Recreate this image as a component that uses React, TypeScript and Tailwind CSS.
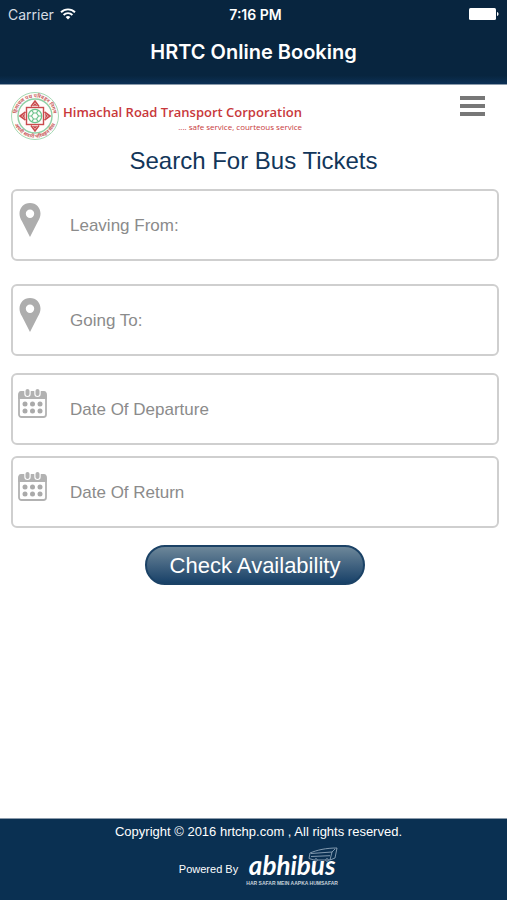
import React from "react";

function WifiIcon() {
  return (
    <svg viewBox="0 0 16 12" className="h-3 w-4" aria-hidden="true">
      <g fill="none" stroke="#fff" strokeWidth="1.9">
        <path d="M1 4.2a10 10 0 0 1 14 0" />
        <path d="M3.6 7a6.2 6.2 0 0 1 8.800 0" />
      </g>
      <path d="M8 11.600 5.600 9.100a3.400 3.400 0 0 1 4.800 0Z" fill="#fff" />
    </svg>
  );
}

function BatteryIcon() {
  return (
    <svg viewBox="0 0 30 12" className="h-3 w-[30px]" aria-hidden="true">
      <rect width="27" height="12" rx="1.5" fill="#fff" />
      <path d="M28 4c2 .3 2 3.700 0 4Z" fill="#fff" />
    </svg>
  );
}

function Emblem() {
  return (
    <svg viewBox="0 0 50 50" className="size-[50px] shrink-0" aria-hidden="true">
      <defs>
        <path id="seal-top" d="M9 34.250A18.500 18.500 0 1 1 41 34.250" />
        <path id="seal-bottom" d="M5.900 14A22 22 0 1 0 44.100 14" />
      </defs>
      <circle cx="25" cy="25" r="23.500" fill="#fffdfb" stroke="#a5d9b5" strokeWidth="1" />
      <circle cx="25" cy="25" r="17" fill="none" stroke="#8fcfa5" strokeWidth="1.400" />
      <g fill="#c9605f" fontFamily="Noto Sans Devanagari, Noto Sans, sans-serif" fontSize="5" fontWeight="700">
        <text>
          <textPath href="#seal-top" startOffset="50%" textAnchor="middle">हिमाचल पथ परिवहन निगम</textPath>
        </text>
        <text>
          <textPath href="#seal-bottom" startOffset="50%" textAnchor="middle">अपनी सवारी परिवहन सेवा</textPath>
        </text>
      </g>
      <g fill="none" stroke="#c94a4c">
        <rect x="16.500" y="16.500" width="17" height="17" strokeWidth="1.400" />
        <path d="m21 15.500 4-5.500 4 5.500M34.500 21l5.500 4-5.500 4M29 34.500 25 40l-4-5.500M15.500 29 10 25l5.500-4" strokeWidth="1.600" />
        <path d="M23.500 15 25 13l1.500 2M35 23.500l2 1.500-2 1.500M26.500 35 25 37l-1.500-2M15 26.500 13 25l2-1.500" strokeWidth="1.300" />
      </g>
      <g fill="none" stroke="#6cc28b" strokeWidth="1.200">
        <circle cx="25" cy="25" r="6.700" />
        <path d="M18.500 25h3l2-3h3l2 3-2 3h-3l-2-3M28.500 25h3M23.500 22 22 19.500M26.500 22l1.500-2.500M23.500 28 22 30.500M26.500 28l1.500 2.500" />
      </g>
    </svg>
  );
}

function PinIcon() {
  return (
    <svg viewBox="0 0 22 34" className="mt-3 ml-1.5 h-[34px] w-[22px]" aria-hidden="true">
      <path
        fill="#adadad"
        fillRule="evenodd"
        d="M11 0C4.800 0 .5 4.700.5 10.500c0 3 .9 5 2.600 8L11 34l7.900-15.500c1.700-3 2.600-5 2.600-8C21.500 4.700 17.200 0 11 0Zm0 6.600a4.200 4.200 0 1 1 0 8.400 4.200 4.200 0 0 1 0-8.400Z"
      />
    </svg>
  );
}

function CalendarIcon() {
  return (
    <svg viewBox="0 0 29 29" className="mt-3.5 ml-[5px] size-[29px]" aria-hidden="true">
      <rect x="1" y="4" width="27" height="24" rx="2.500" fill="#fff" stroke="#b2b2b2" strokeWidth="1.800" />
      <path d="M.2 10V6Q.2 2 3 2h23q2.800 0 2.800 4v4Z" fill="#b2b2b2" />
      {[9.5, 19.5].map((x) => (
        <g key={x}>
          <rect x={x - 3.200} y="-1" width="6.400" height="9" rx="3.200" fill="#fff" />
          <rect x={x - 2} y="0" width="4" height="7" rx="2" fill="#b2b2b2" />
        </g>
      ))}
      {[15, 22].map((y) =>
        [7, 14.5, 22].map((x) => <circle key={`${x}-${y}`} cx={x} cy={y} r="2.500" fill="#aaa" />),
      )}
    </svg>
  );
}

function BusIcon() {
  return (
    <svg viewBox="0 0 30 16" className="absolute -top-1 right-0 h-4 w-[30px]" aria-hidden="true">
      <g fill="none" stroke="#9fb4c7" strokeWidth=".8">
        <path d="M2 6C9 3 18 1 29 1l-2 10-5 2" />
        <path d="M2 6 1 11.500l5 1.500M9.500 13h8M20.500 13H22M3 6.500 24 5l3-3M24 5l-2 8M3 9.500l19-.8" />
        <circle cx="8" cy="13" r="1.300" />
        <circle cx="19" cy="13" r="1.300" />
      </g>
    </svg>
  );
}

function Field({ id, placeholder, icon, className }: { id: string; placeholder: string; icon: React.ReactNode; className: string }) {
  return (
    <div className={`flex h-[72px] items-stretch rounded-md border-2 border-[#cfcfcf] bg-white ${className}`}>
      <label htmlFor={id} aria-label={placeholder} className="w-[57px] shrink-0">
        {icon}
      </label>
      <input
        id={id}
        type="text"
        placeholder={placeholder}
        className="min-w-0 flex-1 bg-transparent pt-0.5 text-[17px] text-[#444] outline-none placeholder:text-[#8b8b8b] placeholder:opacity-100"
      />
    </div>
  );
}

export default function App() {
  return (
    <div className="flex min-h-screen flex-col bg-white font-['Liberation_Sans',Arial,sans-serif]">
      <header className="h-[85px] border-b border-[#8b9bab] bg-linear-to-b from-[#08253f] from-90% to-[#0c3156] font-['Inter',sans-serif] text-white">
        <div className="grid h-7 grid-cols-3 items-center px-2">
          <div className="flex items-center gap-1.5 text-[14px] text-[#d5dce3]">
            <span>Carrier</span>
            <WifiIcon />
          </div>
          <div className="pl-1 text-center text-[14px] font-semibold">7:16 PM</div>
          <div className="flex justify-end">
            <BatteryIcon />
          </div>
        </div>
        <h1 className="mt-2.5 text-center text-[20px] leading-7 font-semibold">HRTC Online Booking</h1>
      </header>

      <main className="flex-1">
        <div className="flex items-start justify-between pt-1.5 pr-[22px] pl-2.5">
          <div className="flex">
            <Emblem />
            <div className="ml-[3px] pt-3 font-['Open_Sans',sans-serif] text-[#c8383b]">
              <p className="text-[13px] leading-[18px] font-semibold whitespace-nowrap">Himachal Road Transport Corporation</p>
              <p className="text-right text-[8px] leading-3">.... safe service, courteous service</p>
            </div>
          </div>
          <button type="button" aria-label="Menu" className="mt-[5px] flex w-[25px] flex-col gap-1">
            <span className="h-1 bg-[#777]" />
            <span className="h-1 bg-[#777]" />
            <span className="h-1 bg-[#777]" />
          </button>
        </div>

        <h2 className="mt-1 text-center text-[24px] leading-8 text-[#12365a]">Search For Bus Tickets</h2>

        <form className="mt-3 pr-2 pl-[11px]" onSubmit={(e) => e.preventDefault()}>
          <Field id="from" placeholder="Leaving From:" icon={<PinIcon />} className="" />
          <Field id="to" placeholder="Going To:" icon={<PinIcon />} className="mt-[23px]" />
          <Field id="departure" placeholder="Date Of Departure" icon={<CalendarIcon />} className="mt-[17px]" />
          <Field id="return" placeholder="Date Of Return" icon={<CalendarIcon />} className="mt-[11px]" />
          <button
            type="submit"
            className="mx-auto mt-[17px] block h-10 w-[220px] rounded-full border-2 border-[#1b4266] bg-linear-to-b from-[#6d8799] to-[#174168] text-[22px] text-white"
          >
            Check Availability
          </button>
        </form>
      </main>

      <footer className="h-[82px] border-t border-[#8b9bab] bg-[#0a3052] pt-1 text-center text-white">
        <p className="ml-2.5 text-[13px] leading-[18px]">Copyright © 2016 hrtchp.com , All rights reserved.</p>
        <div className="mt-2.5 ml-2.5 flex items-center justify-center gap-2">
          <span className="text-[11px]">Powered By</span>
          <div className="relative w-[92px]">
            <BusIcon />
            <p className="font-['Lato',sans-serif] text-[26px] leading-7 font-bold italic">abhibus</p>
            <p className="text-[5px] leading-2 font-bold whitespace-nowrap text-[#c5d0da]">HAR SAFAR MEIN AAPKA HUMSAFAR</p>
          </div>
        </div>
      </footer>
    </div>
  );
}
